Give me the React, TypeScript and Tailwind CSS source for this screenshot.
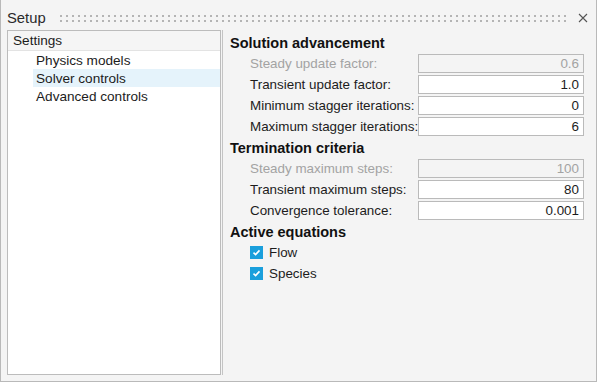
import React from 'react';

interface FieldRow {
  label: string;
  value: string;
  disabled?: boolean;
}

const solution: FieldRow[] = [
  { label: 'Steady update factor:', value: '0.6', disabled: true },
  { label: 'Transient update factor:', value: '1.0' },
  { label: 'Minimum stagger iterations:', value: '0' },
  { label: 'Maximum stagger iterations:', value: '6' },
];

const termination: FieldRow[] = [
  { label: 'Steady maximum steps:', value: '100', disabled: true },
  { label: 'Transient maximum steps:', value: '80' },
  { label: 'Convergence tolerance:', value: '0.001' },
];

const Field: React.FC<FieldRow> = ({ label, value, disabled }) => (
  <div className="flex items-center h-[21px] pl-[27px]">
    <span className={`w-[168px] shrink-0 whitespace-nowrap ${disabled ? 'text-[#a3a3a3]' : 'text-[#1c1c1c]'}`}>{label}</span>
    <div
      className={`w-[166px] h-[19px] border border-[#bababa] flex items-center justify-end pr-[4px] ${
        disabled ? 'bg-[#f4f4f4] text-[#a3a3a3]' : 'bg-white text-[#1c1c1c]'
      }`}
    >
      {value}
    </div>
  </div>
);

const Check: React.FC<{ label: string }> = ({ label }) => (
  <div className="flex items-center h-[21px] pl-[27px]">
    <div className="w-[13px] h-[13px] bg-[#1a9fdc] flex items-center justify-center">
      <svg width="9" height="9" viewBox="0 0 9 9">
        <path d="M1.5 4.6 L3.6 6.6 L7.5 2.4" fill="none" stroke="white" strokeWidth="1.6" />
      </svg>
    </div>
    <span className="ml-[6px] text-[#1c1c1c]">{label}</span>
  </div>
);

const Heading: React.FC<{ children: React.ReactNode }> = ({ children }) => (
  <div className="h-[20px] flex items-center pl-[7px] font-bold text-[14.5px] text-[#111]">{children}</div>
);

export default function App() {
  return (
    <div className="w-[597px] h-[382px] bg-[#f4f4f4] border-x border-b border-[#b9b9b9] flex flex-col font-['Liberation_Sans',Arial,sans-serif] text-[13.4px] leading-[15px]">
      {/* title bar */}
      <div className="h-[30px] shrink-0 flex items-start pl-[6px] pr-[8px]">
        <span className="mt-[10px] text-[14.8px] leading-[16px] text-[#2a2a2a]">Setup</span>
        <svg className="mt-[15px] ml-[14px] flex-1" height="7">
          <defs>
            <pattern id="grip" width="6" height="5" patternUnits="userSpaceOnUse">
              <rect width="2" height="2" fill="#b4b4b4" />
            </pattern>
          </defs>
          <rect width="100%" height="7" fill="url(#grip)" />
        </svg>
        <svg className="mt-[13px] ml-[9px]" width="10" height="10" viewBox="0 0 10 10">
          <path d="M1 1 L9 9 M9 1 L1 9" stroke="#555" strokeWidth="1.1" />
        </svg>
      </div>

      {/* body */}
      <div className="flex-1 flex pl-[6px] pb-[6px]">
        <div className="w-[214px] shrink-0 bg-white border border-[#bcbcbc] flex flex-col text-[13.6px]">
          <div className="h-[20px] flex items-center pl-[5px] bg-[#f5f5f5] border-b border-[#e3e3e3] text-[#1c1c1c]">
            Settings
          </div>
          <div className="flex flex-col pl-[25px] text-[#1c1c1c]">
            <div className="h-[18px] flex items-center pl-[3px]">Physics models</div>
            <div className="h-[18px] flex items-center pl-[3px] bg-[#e5f3fb]">Solver controls</div>
            <div className="h-[18px] flex items-center pl-[3px]">Advanced controls</div>
          </div>
        </div>
        <div className="w-[2px] shrink-0 border-r border-[#c4c4c4]" />

        <div className="flex-1 flex flex-col pt-[3px]">
          <Heading>Solution advancement</Heading>
          {solution.map((r) => (
            <Field key={r.label} {...r} />
          ))}
          <div className="h-[1px]" />
          <Heading>Termination criteria</Heading>
          {termination.map((r) => (
            <Field key={r.label} {...r} />
          ))}
          <div className="h-[1px]" />
          <Heading>Active equations</Heading>
          <Check label="Flow" />
          <Check label="Species" />
        </div>
      </div>
    </div>
  );
}
